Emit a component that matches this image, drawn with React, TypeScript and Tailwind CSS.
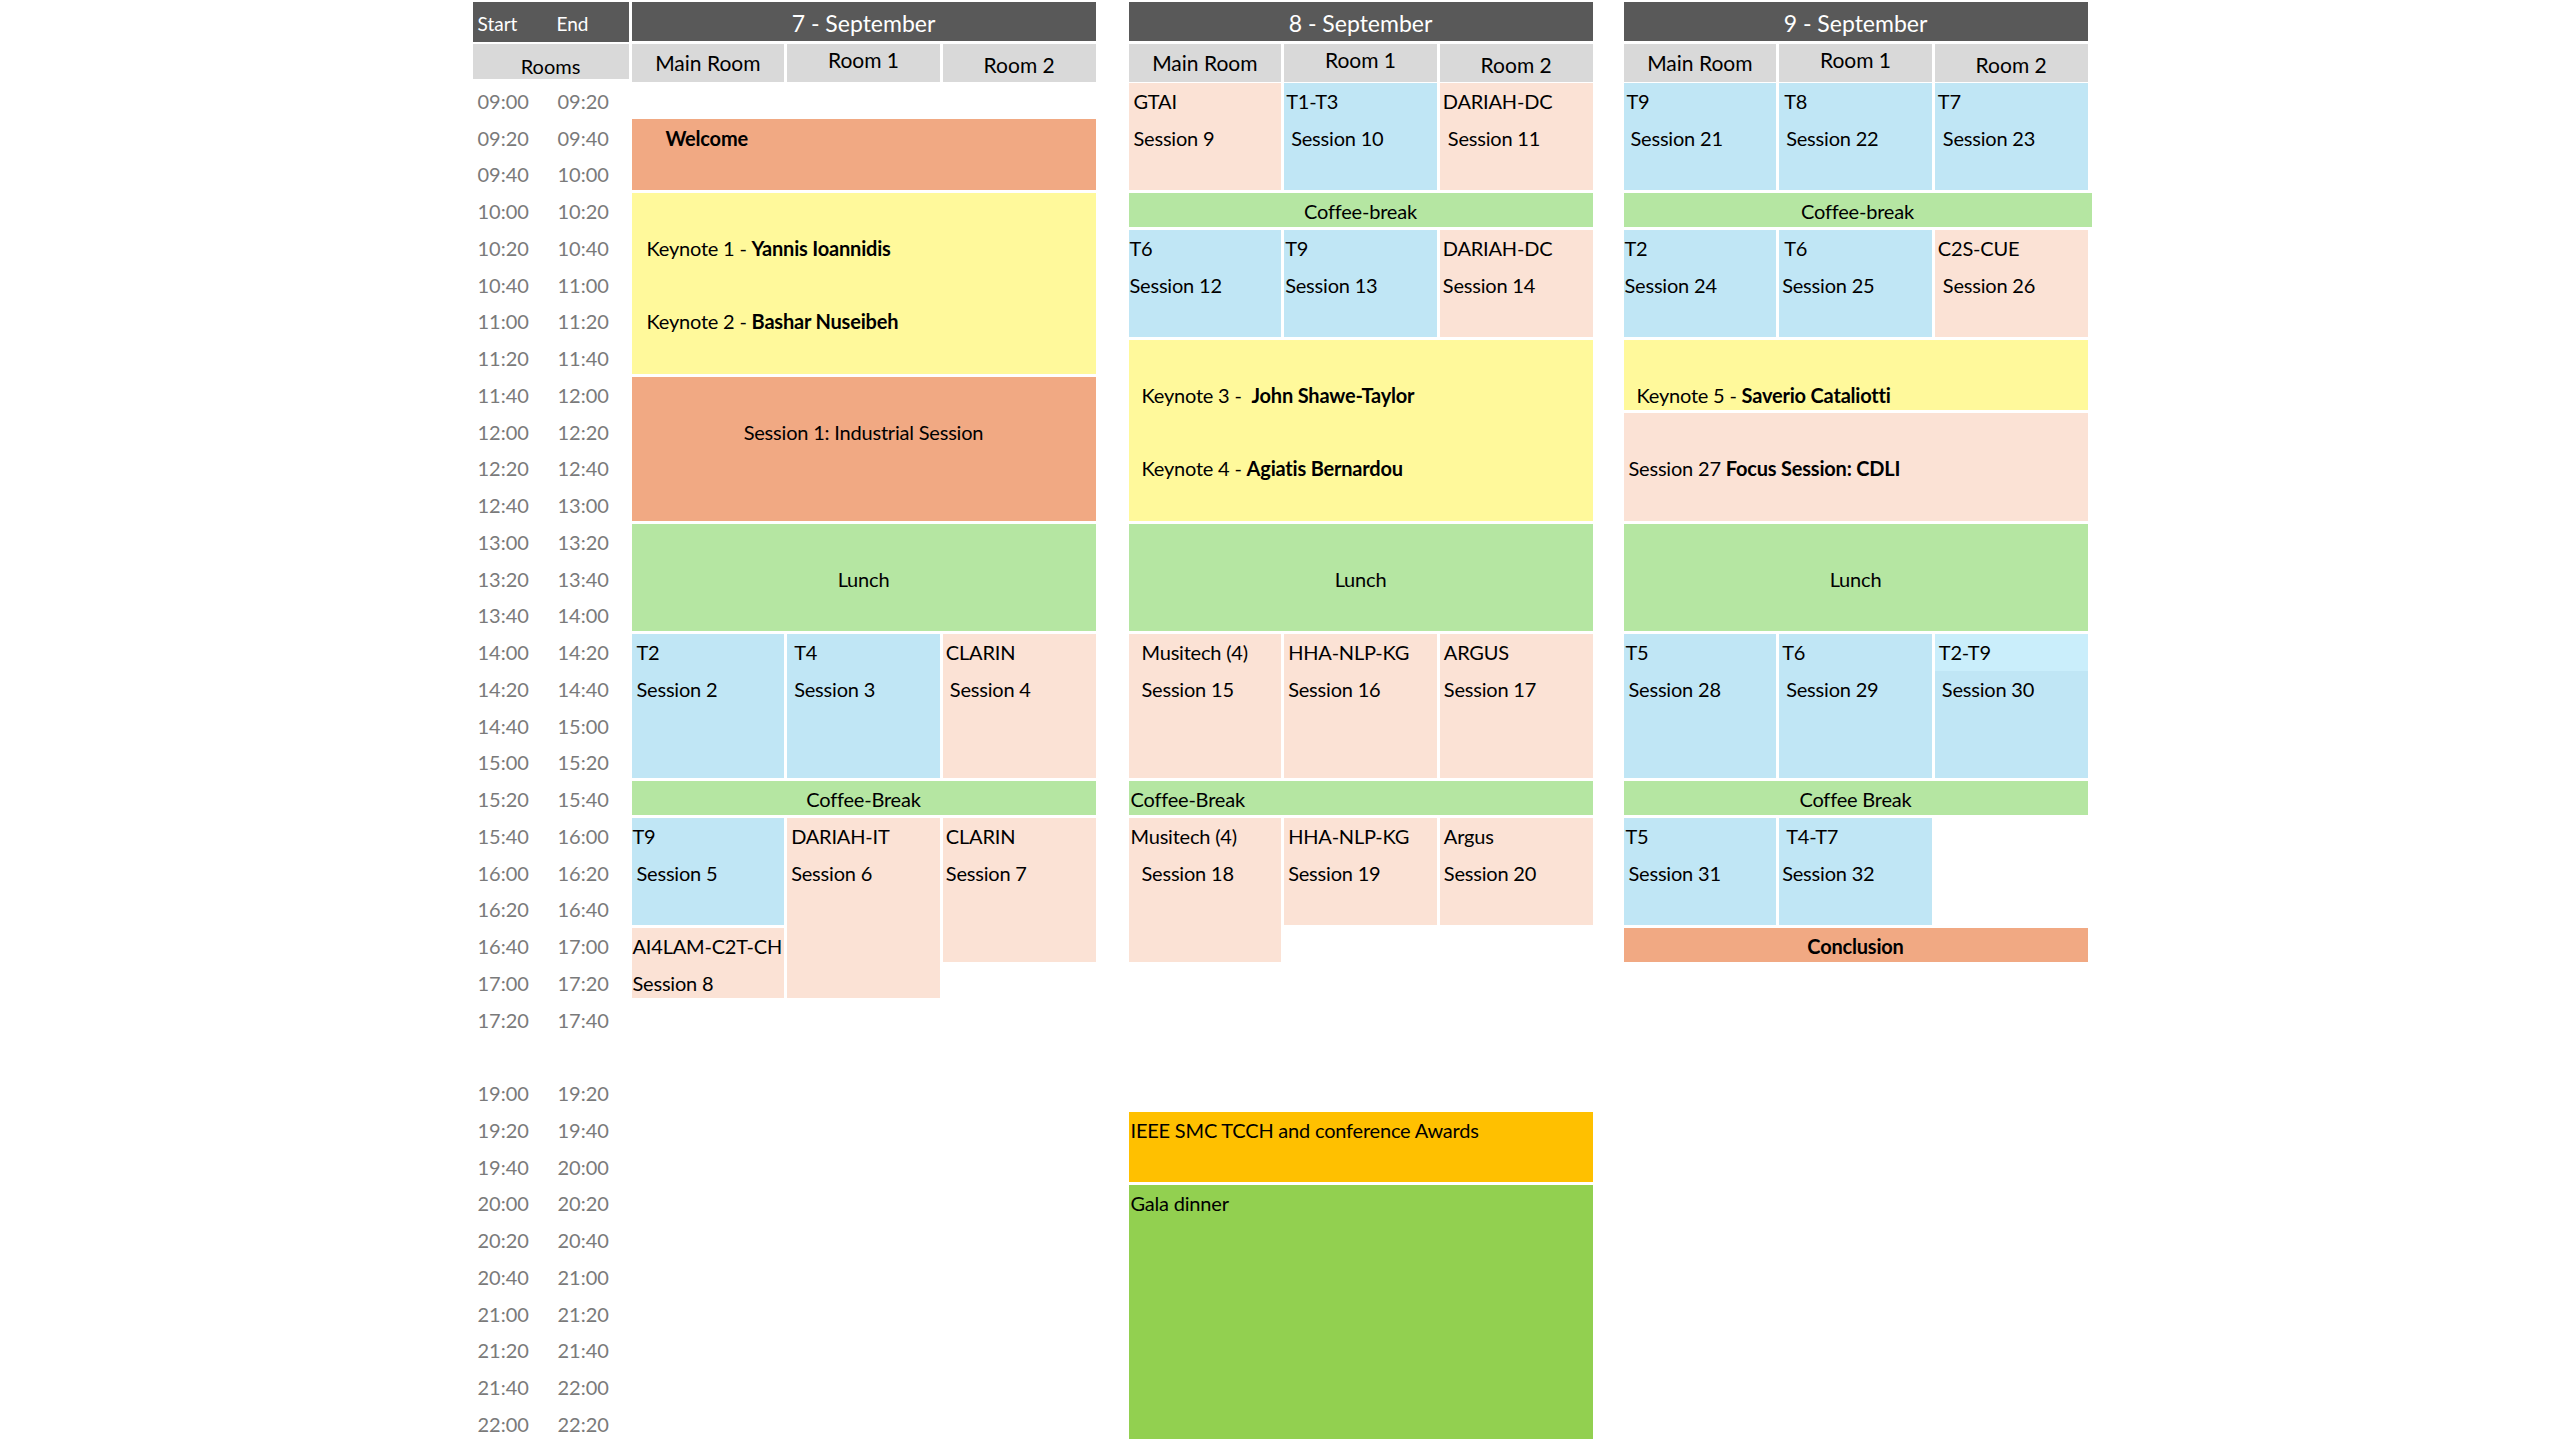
import React from "react";

type Line = { t?: string; b?: string; x: string } | null;

type Block = {
	pos: string;
	bg: string;
	lines?: Line[];
	center?: string;
	bold?: boolean;
	extra?: string;
};

type Day = { title: string; blocks: Block[] };

const SAL = "bg-[#f1a983]";
const PINK = "bg-[#fbe2d5]";
const BLUE = "bg-[#c0e6f5]";
const GREEN = "bg-[#b5e6a2]";
const YEL = "bg-[#fff99b]";
const ORANGE = "bg-[#ffc000]";
const GALA = "bg-[#92d050]";

const two = (a: string, ax: string, b: string, bx: string): Line[] => [
	{ t: a, x: ax },
	{ t: b, x: bx },
];

const days: Day[] = [
	{
		title: "7 - September",
		blocks: [
			{ pos: "row-start-2 row-span-2 col-start-1 col-span-3", bg: SAL, lines: [{ b: "Welcome", x: "pl-[34px]" }] },
			{
				pos: "row-start-4 row-span-5 col-start-1 col-span-3",
				bg: YEL,
				lines: [
					null,
					{ t: "Keynote 1 - ", b: "Yannis Ioannidis", x: "pl-[15px]" },
					null,
					{ t: "Keynote 2 - ", b: "Bashar Nuseibeh", x: "pl-[15px]" },
				],
			},
			{
				pos: "row-start-9 row-span-4 col-start-1 col-span-3",
				bg: SAL,
				lines: [null, { t: "Session 1: Industrial Session", x: "justify-center" }],
			},
			{ pos: "row-start-13 row-span-3 col-start-1 col-span-3", bg: GREEN, center: "Lunch" },
			{ pos: "row-start-16 row-span-4 col-start-1", bg: BLUE, lines: two("T2", "pl-[5px]", "Session 2", "pl-[5px]") },
			{ pos: "row-start-16 row-span-4 col-start-2", bg: BLUE, lines: two("T4", "pl-[7px]", "Session 3", "pl-[7px]") },
			{ pos: "row-start-16 row-span-4 col-start-3", bg: PINK, lines: two("CLARIN", "pl-[3px]", "Session 4", "pl-[7px]") },
			{ pos: "row-start-20 row-span-1 col-start-1 col-span-3", bg: GREEN, center: "Coffee-Break" },
			{ pos: "row-start-21 row-span-3 col-start-1", bg: BLUE, lines: two("T9", "pl-[1px]", "Session 5", "pl-[5px]") },
			{ pos: "row-start-21 row-span-5 col-start-2", bg: PINK, lines: two("DARIAH-IT", "pl-[4px]", "Session 6", "pl-[4px]") },
			{ pos: "row-start-21 row-span-4 col-start-3", bg: PINK, lines: two("CLARIN", "pl-[3px]", "Session 7", "pl-[3px]") },
			{ pos: "row-start-24 row-span-2 col-start-1", bg: PINK, lines: two("AI4LAM-C2T-CH", "pl-[1px]", "Session 8", "pl-[1px]") },
		],
	},
	{
		title: "8 - September",
		blocks: [
			{ pos: "row-start-1 row-span-3 col-start-1", bg: PINK, lines: two("GTAI", "pl-[5px]", "Session 9", "pl-[5px]") },
			{ pos: "row-start-1 row-span-3 col-start-2", bg: BLUE, lines: two("T1-T3", "pl-[2px]", "Session 10", "pl-[7px]") },
			{ pos: "row-start-1 row-span-3 col-start-3", bg: PINK, lines: two("DARIAH-DC", "pl-[3px]", "Session 11", "pl-[8px]") },
			{ pos: "row-start-4 row-span-1 col-start-1 col-span-3", bg: GREEN, center: "Coffee-break" },
			{ pos: "row-start-5 row-span-3 col-start-1", bg: BLUE, lines: two("T6", "pl-[1px]", "Session 12", "pl-[1px]") },
			{ pos: "row-start-5 row-span-3 col-start-2", bg: BLUE, lines: two("T9", "pl-[1px]", "Session 13", "pl-[1px]") },
			{ pos: "row-start-5 row-span-3 col-start-3", bg: PINK, lines: two("DARIAH-DC", "pl-[3px]", "Session 14", "pl-[3px]") },
			{
				pos: "row-start-8 row-span-5 col-start-1 col-span-3",
				bg: YEL,
				lines: [
					null,
					{ t: "Keynote 3 -  ", b: "John Shawe-Taylor", x: "pl-[13px]" },
					null,
					{ t: "Keynote 4 - ", b: "Agiatis Bernardou", x: "pl-[13px]" },
				],
			},
			{ pos: "row-start-13 row-span-3 col-start-1 col-span-3", bg: GREEN, center: "Lunch" },
			{ pos: "row-start-16 row-span-4 col-start-1", bg: PINK, lines: two("Musitech (4)", "pl-[13px]", "Session 15", "pl-[13px]") },
			{ pos: "row-start-16 row-span-4 col-start-2", bg: PINK, lines: two("HHA-NLP-KG", "pl-[4px]", "Session 16", "pl-[4px]") },
			{ pos: "row-start-16 row-span-4 col-start-3", bg: PINK, lines: two("ARGUS", "pl-[4px]", "Session 17", "pl-[4px]") },
			{ pos: "row-start-20 row-span-1 col-start-1 col-span-3", bg: GREEN, lines: [{ t: "Coffee-Break", x: "pl-[2px]" }] },
			{ pos: "row-start-21 row-span-4 col-start-1", bg: PINK, lines: two("Musitech (4)", "pl-[2px]", "Session 18", "pl-[13px]") },
			{ pos: "row-start-21 row-span-3 col-start-2", bg: PINK, lines: two("HHA-NLP-KG", "pl-[4px]", "Session 19", "pl-[4px]") },
			{ pos: "row-start-21 row-span-3 col-start-3", bg: PINK, lines: two("Argus", "pl-[4px]", "Session 20", "pl-[4px]") },
			{
				pos: "row-start-29 row-span-2 col-start-1 col-span-3",
				bg: ORANGE,
				lines: [{ t: "IEEE SMC TCCH and conference Awards", x: "pl-[2px]" }],
			},
			{ pos: "row-start-31 row-span-7 col-start-1 col-span-3", bg: GALA, lines: [{ t: "Gala dinner", x: "pl-[2px]" }] },
		],
	},
	{
		title: "9 - September",
		blocks: [
			{ pos: "row-start-1 row-span-3 col-start-1", bg: BLUE, lines: two("T9", "pl-[3px]", "Session 21", "pl-[7px]") },
			{ pos: "row-start-1 row-span-3 col-start-2", bg: BLUE, lines: two("T8", "pl-[5px]", "Session 22", "pl-[7px]") },
			{ pos: "row-start-1 row-span-3 col-start-3", bg: BLUE, lines: two("T7", "pl-[3px]", "Session 23", "pl-[8px]") },
			{ pos: "row-start-4 row-span-1 col-start-1 col-span-3", bg: GREEN, center: "Coffee-break", extra: "-mr-[4px]" },
			{ pos: "row-start-5 row-span-3 col-start-1", bg: BLUE, lines: two("T2", "pl-[1px]", "Session 24", "pl-[1px]") },
			{ pos: "row-start-5 row-span-3 col-start-2", bg: BLUE, lines: two("T6", "pl-[5px]", "Session 25", "pl-[3px]") },
			{ pos: "row-start-5 row-span-3 col-start-3", bg: PINK, lines: two("C2S-CUE", "pl-[3px]", "Session 26", "pl-[8px]") },
			{
				pos: "row-start-8 row-span-2 col-start-1 col-span-3",
				bg: YEL,
				lines: [null, { t: "Keynote 5 - ", b: "Saverio Cataliotti", x: "pl-[13px]" }],
			},
			{
				pos: "row-start-10 row-span-3 col-start-1 col-span-3",
				bg: PINK,
				lines: [null, { t: "Session 27 ", b: "Focus Session: CDLI", x: "pl-[5px]" }],
			},
			{ pos: "row-start-13 row-span-3 col-start-1 col-span-3", bg: GREEN, center: "Lunch" },
			{ pos: "row-start-16 row-span-4 col-start-1", bg: BLUE, lines: two("T5", "pl-[2px]", "Session 28", "pl-[5px]") },
			{ pos: "row-start-16 row-span-4 col-start-2", bg: BLUE, lines: two("T6", "pl-[3px]", "Session 29", "pl-[7px]") },
			{
				pos: "row-start-16 row-span-4 col-start-3",
				bg: BLUE,
				lines: two("T2-T9", "pl-[4px] bg-[#caeefb]", "Session 30", "pl-[7px]"),
			},
			{ pos: "row-start-20 row-span-1 col-start-1 col-span-3", bg: GREEN, center: "Coffee Break" },
			{ pos: "row-start-21 row-span-3 col-start-1", bg: BLUE, lines: two("T5", "pl-[2px]", "Session 31", "pl-[5px]") },
			{ pos: "row-start-21 row-span-3 col-start-2", bg: BLUE, lines: two("T4-T7", "pl-[7px]", "Session 32", "pl-[3px]") },
			{ pos: "row-start-24 row-span-1 col-start-1 col-span-3", bg: SAL, center: "Conclusion", bold: true },
		],
	},
];

const fmt = (m: number) =>
	`${String(Math.floor(m / 60)).padStart(2, "0")}:${String(m % 60).padStart(2, "0")}`;

// 09:00 .. 17:20, one empty row, then 19:00 .. 22:00
const times: (number | null)[] = [];
for (let m = 9 * 60; m <= 17 * 60 + 20; m += 20) times.push(m);
times.push(null);
for (let m = 19 * 60; m <= 22 * 60; m += 20) times.push(m);

const rooms = [
	{ name: "Main Room", pad: "pt-0" },
	{ name: "Room 1", pad: "pb-[6px]" },
	{ name: "Room 2", pad: "pt-[3px]" },
];

const Cell = ({ b }: { b: Block }) => {
	if (b.center) {
		return (
			<div className={`${b.pos} ${b.bg} ${b.extra ?? ""} flex items-center justify-center overflow-hidden pt-[3px]`}>
				<span className={b.bold ? "font-bold" : ""}>{b.center}</span>
			</div>
		);
	}
	return (
		<div className={`${b.pos} ${b.bg} ${b.extra ?? ""} overflow-hidden`}>
			{b.lines?.map((l, i) => (
				<div key={i} className={`flex h-[36.75px] shrink-0 items-center whitespace-pre ${l ? l.x : ""}`}>
					{l && (
						<>
							{l.t}
							{l.b && <span className="font-bold">{l.b}</span>}
						</>
					)}
				</div>
			))}
		</div>
	);
};

const DayColumn = ({ day }: { day: Day }) => (
	<div className="flex w-[464px] shrink-0 flex-col">
		<div className="flex h-[39px] items-center justify-center bg-[#595959] pt-[3px] text-[23px] text-white">
			{day.title}
		</div>
		<div className="mt-[3px] grid h-[35px] grid-cols-3 gap-[3px]">
			{rooms.map((r) => (
				<div key={r.name} className={`flex items-center justify-center bg-[#d9d9d9] text-[21px] ${r.pad}`}>
					{r.name}
				</div>
			))}
		</div>
		<div className="mt-[3.5px] grid grid-cols-3 grid-rows-[repeat(37,33.75px)] gap-[3px] text-[20px] tracking-[-0.2px] text-black">
			{day.blocks.map((b, i) => (
				<Cell key={i} b={b} />
			))}
		</div>
	</div>
);

const App = () => {
	return (
		<div className="h-[1440px] w-full overflow-hidden bg-white [font-family:Lato,'Liberation_Sans',sans-serif] text-black">
			<div className="mx-auto flex w-[1615px] pt-[2px]">
				{/* time column */}
				<div className="flex w-[156px] shrink-0 flex-col">
					<div className="flex h-[40px] items-center bg-[#595959] pt-[5px] text-[19px] text-white">
						<span className="w-[84px] pl-[5px]">Start</span>
						<span>End</span>
					</div>
					<div className="mt-[2px] flex h-[35px] items-center justify-center bg-[#d9d9d9] pt-[8px] text-[20px]">
						Rooms
					</div>
					<div className="mt-[3.5px] flex flex-col text-[20px] text-[#7a7a7a]">
						{times.map((m, i) => (
							<div key={i} className="flex h-[36.75px] items-center">
								{m !== null && (
									<>
										<span className="w-[85px] pl-[5px]">{fmt(m)}</span>
										<span>{fmt(m + 20)}</span>
									</>
								)}
							</div>
						))}
					</div>
				</div>

				<div className="ml-[3px]">
					<DayColumn day={days[0]} />
				</div>
				<div className="ml-[33px]">
					<DayColumn day={days[1]} />
				</div>
				<div className="ml-[31px]">
					<DayColumn day={days[2]} />
				</div>
			</div>
		</div>
	);
};

export default App;
